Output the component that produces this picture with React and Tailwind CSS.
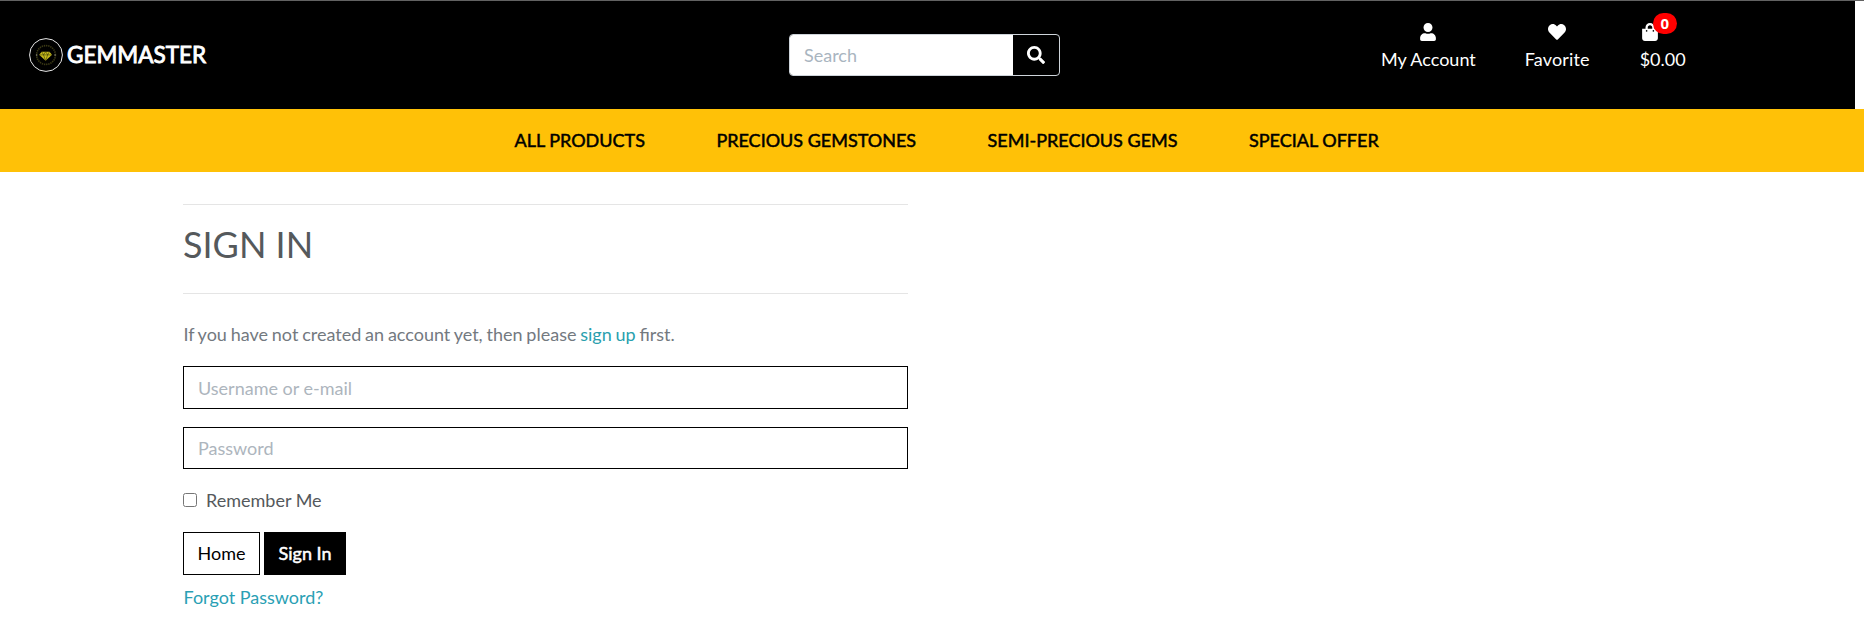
import React from "react";
import { FaHeart, FaSearch, FaShoppingBag, FaUser } from "react-icons/fa";

const navItems = ["ALL PRODUCTS", "PRECIOUS GEMSTONES", "SEMI-PRECIOUS GEMS", "SPECIAL OFFER"];

function Logo() {
  return (
    <svg viewBox="0 0 34 34" className="size-[34px] shrink-0">
      <circle cx="17" cy="17" r="16.4" fill="#000" stroke="#e8e8e8" strokeWidth="1" />
      <circle cx="17" cy="17" r="9.4" fill="none" stroke="#3b3915" strokeWidth="1.6" strokeDasharray="1.4 0.8" />
      <path d="M12.800 13.700h7.600l2.600 3.100-6.400 6-6.400-6z" fill="#c9bd1c" />
      <path d="M10.200 16.900h12.800M12.800 13.700l1.700 3.200 2.100 5.900 2.100-5.900 1.700-3.200M14.500 16.900l2.100-3.200 2.100 3.200" fill="none" stroke="#3d3a08" strokeWidth="0.6" />
      <path d="M7 17h1.300M25.400 17h1.300" stroke="#9a9a9a" strokeWidth="1" />
    </svg>
  );
}

function Account({ icon, label }) {
  return (
    <a className="flex flex-col items-center gap-[5px]">
      {icon}
      <span>{label}</span>
    </a>
  );
}

export default function App() {
  return (
    <div className="h-[625px] overflow-hidden bg-white font-['Lato',sans-serif] text-[18px] leading-[27px] text-[#55595c]">
      <div className="h-px bg-[#626262]" />
      <header className="mr-[9px] flex h-[108px] items-start bg-black text-white">
        <a className="mt-[37px] ml-[29px] flex w-[760px] items-center">
          <Logo />
          <span className="ml-1 text-[22.5px] leading-[34px] [-webkit-text-stroke:0.9px_white]">GEMMASTER</span>
        </a>
        <form className="mt-[33px] flex h-[42px] w-[271px] overflow-hidden rounded-[4px] border border-[#ced4da]">
          <input placeholder="Search" className="min-w-0 flex-1 bg-white px-[14px] placeholder:text-[#a9b5bf]" />
          <button type="button" className="flex w-[46px] items-center justify-center"><FaSearch /></button>
        </form>
        <div className="mt-[22px] ml-[321px] flex">
          <Account icon={<FaUser />} label="My Account" />
          <div className="ml-[49px] tracking-[0.15px]">
            <Account icon={<FaHeart />} label="Favorite" />
          </div>
          <a className="relative ml-[50px] flex flex-col items-start gap-[5px]">
            <FaShoppingBag className="ml-px" />
            <span>$0.00</span>
            <span className="absolute -top-2.5 left-[13px] flex h-[21px] w-6 items-center justify-center rounded-full bg-[#ff0000] font-['Open_Sans',sans-serif] text-[15px] font-bold">0</span>
          </a>
        </div>
      </header>
      <nav className="flex h-[63px] items-center gap-[72px] bg-[#ffc107] pl-[514.5px] text-black [-webkit-text-stroke:0.5px_black]">
        {navItems.map((t) => (
          <a key={t} className="-mr-[0.5px]">{t}</a>
        ))}
      </nav>
      <main className="ml-[183px] w-[725px] pt-8">
        <hr className="border-[#e5e5e5]" />
        <h1 className="mt-[18px] mb-[27px] text-4xl leading-[43px]">SIGN IN</h1>
        <hr className="border-[#e5e5e5]" />
        <p className="mt-[27px] mb-[18px] pl-[0.5px] text-[#73797f] [word-spacing:-0.8px]">
          If you have not created an account yet, then please <a className="text-[#2a9fae]">sign up</a> first.
        </p>
        <input placeholder="Username or e-mail" className="block h-[43px] w-full border border-black px-[14px] placeholder:text-[#adb5bd]" />
        <input placeholder="Password" className="mt-[18px] block h-[42px] w-full border border-black px-[14px] placeholder:text-[#adb5bd]" />
        <label className="mt-[18px] flex h-[27px] items-center">
          <input type="checkbox" className="mb-px size-[14px]" />
          <span className="ml-[9px]">Remember Me</span>
        </label>
        <div className="mt-[18px] flex gap-1">
          <button className="h-[43px] w-[77px] border border-black text-black">Home</button>
          <button className="h-[43px] w-[82px] bg-black text-white [-webkit-text-stroke:0.5px_white]">Sign In</button>
        </div>
        <a className="mt-[9px] block pl-[0.5px] text-[#2a9fb4]">Forgot Password?</a>
      </main>
    </div>
  );
}
